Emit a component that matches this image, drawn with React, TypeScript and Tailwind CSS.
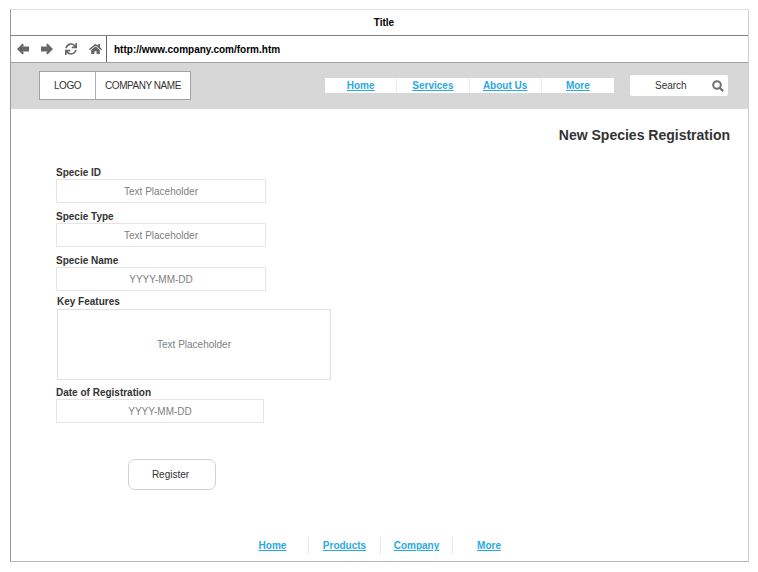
import { FaSync, FaHome } from "react-icons/fa";

function Field({ label, value, box }: { label: string; value: string; box: string }) {
  return (
    <div className="ml-[45px]">
      <div className="h-[16px] text-[10px] leading-[19px] font-bold text-[#333333]">{label}</div>
      <div className={`flex items-center justify-center border border-[#e6e6e6] bg-white text-[10px] text-[#808080] ${box}`}>{value}</div>
    </div>
  );
}

function Arrow({ flip, className }: { flip?: boolean; className: string }) {
  return (
    <svg viewBox="0 0 12 12" className={className} fill="currentColor">
      <polygon points={flip ? "12,6 6.5,0.5 5,2 6.5,3.6 0,3.6 0,8.4 6.5,8.4 5,10 6.5,11.5" : "0,6 5.5,0.5 7,2 5.5,3.6 12,3.6 12,8.4 5.5,8.4 7,10 5.5,11.5"} />
    </svg>
  );
}

export default function App() {
  const nav = ["Home", "Services", "About Us", "More"];
  const foot = ["Home", "Products", "Company", "More"];
  return (
    <div className="h-[572px] w-[758px] bg-white pt-[9px] pl-[10px] font-['Liberation_Sans',Arial,sans-serif]">
      <div className="flex h-[553px] w-[739px] flex-col border border-t-[#e0e0e0] border-r-[#cfcfcf] border-b-[#b8b8b8] border-l-[#9a9a9a]">
        <div className="flex h-[25px] shrink-0 items-center justify-center pl-[9px] text-[10px] font-bold text-black">Title</div>
        <div className="flex h-[28px] shrink-0 border-y border-t-[#808080] border-b-[#a0a0a0]">
          <div className="flex w-[96px] shrink-0 items-center border-r border-[#666666] text-[#666666]">
            <Arrow className="ml-[6px] h-[12px] w-[12px]" />
            <Arrow flip className="ml-[12px] h-[12px] w-[12px]" />
            <FaSync className="ml-[12px] h-[12px] w-[12px]" />
            <FaHome className="ml-[12px] h-[12px] w-[13px]" />
          </div>
          <div className="flex items-center pl-[7px] text-[10px] font-bold text-black">http://www.company.com/form.htm</div>
        </div>
        <div className="flex h-[46px] shrink-0 items-center bg-[#d7d7d7] pb-[2px]">
          <div className="ml-[28px] flex h-[29px] w-[152px] border border-[#a3a3a3] bg-white text-[10px] tracking-[-0.45px] text-[#333333]">
            <div className="flex w-[56px] items-center justify-center border-r border-[#b0b0b0]">LOGO</div>
            <div className="flex flex-1 items-center justify-center">COMPANY NAME</div>
          </div>
          <div className="ml-[134px] flex h-[15px] w-[289px] bg-white">
            {nav.map((n, i) => (
              <div key={n} className={`flex w-[72.25px] items-center justify-center text-[10px] font-bold text-[#29a9e0] underline ${i < 3 ? "border-r border-[#ececec]" : ""}`}>{n}</div>
            ))}
          </div>
          <div className="relative ml-[16px] flex h-[21px] w-[98px] items-center rounded-[2px] bg-white pl-[25px] text-[10px] text-[#333333]">
            Search
            <svg viewBox="0 0 12 12" className="absolute right-[4px] top-[5px] h-[12px] w-[12px] text-[#707070]" fill="none" stroke="currentColor">
              <circle cx="5" cy="5" r="3.8" strokeWidth="2" />
              <path d="M8 8l3.2 3.2" strokeWidth="2.2" />
            </svg>
          </div>
        </div>
        <div className="flex min-h-0 flex-1 flex-col">
          <div className="mt-[17px] mr-[18px] h-[18px] text-right text-[14px] leading-[18px] font-bold text-[#333333]">New Species Registration</div>
          <div className="mt-[19px] flex flex-col gap-[4px]">
            <Field label="Specie ID" value="Text Placeholder" box="h-[24px] w-[210px]" />
            <Field label="Specie Type" value="Text Placeholder" box="h-[24px] w-[210px]" />
            <Field label="Specie Name" value="YYYY-MM-DD" box="h-[24px] w-[210px]" />
          </div>
          <div className="ml-[46px] mt-[3px]">
            <div className="h-[15px] text-[10px] leading-[15px] font-bold text-[#333333]">Key Features</div>
            <div className="flex h-[71px] w-[274px] items-center justify-center border border-[#e0e0e0] text-[10px] text-[#808080]">Text Placeholder</div>
          </div>
          <div className="ml-[45px] mt-[5px]">
            <div className="h-[14px] text-[10px] leading-[15px] font-bold text-[#333333]">Date of Registration</div>
            <div className="flex h-[24px] w-[208px] items-center justify-center border border-[#e6e6e6] text-[10px] text-[#808080]">YYYY-MM-DD</div>
          </div>
          <div className="ml-[117px] mt-[36px] flex h-[31px] w-[88px] items-center justify-center rounded-[7px] border border-[#d0d0d0] pr-[3px] text-[10px] text-[#333333]">Register</div>
          <div className="mt-auto mb-[7px] ml-[226px] flex h-[17px]">
            {foot.map((n, i) => (
              <div key={n} className={`flex w-[72px] items-center justify-center text-[10px] font-bold text-[#29a9e0] underline ${i < 3 ? "border-r border-[#e6e6e6]" : ""}`}>{n}</div>
            ))}
          </div>
        </div>
      </div>
    </div>
  );
}
